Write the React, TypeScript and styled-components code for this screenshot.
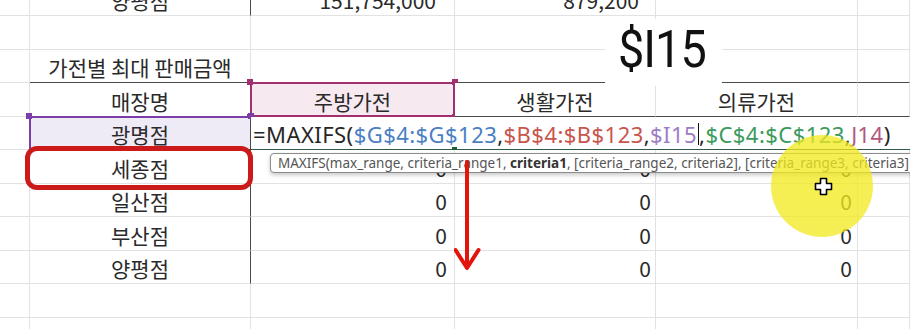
import React from "react";
import styled, { createGlobalStyle, css } from "styled-components";

const GlobalStyle = createGlobalStyle`
  html, body { margin: 0; padding: 0; background: #ffffff; overflow: hidden; }
  * { box-sizing: border-box; }
`;

const GRID = "#e2e2e2";
const DARK = "#4a4a4a";
const TEXT = "#2a2a2a";
const KFONT = `"Noto Sans CJK KR", "Noto Sans", sans-serif`;

const Stage = styled.div`
  position: relative;
  width: 910px;
  height: 329px;
  overflow: hidden;
  background: #fff;
  font-family: ${KFONT};
`;

const Sheet = styled.div`
  display: grid;
  grid-template-columns: 30px 221px 204px 201px 202px 1fr;
  grid-auto-rows: 33.5px;
  margin-top: -17.5px;
`;

type CellProps = {
  $align?: "left" | "center" | "right";
  $pad?: number;
  $right?: string;
  $bottom?: string;
  $bg?: string;
  $span?: boolean;
};

const Cell = styled.div<CellProps>`
  position: relative;
  display: flex;
  align-items: center;
  justify-content: ${(p) =>
    p.$align === "right" ? "flex-end" : p.$align === "left" ? "flex-start" : "center"};
  padding: 3px ${(p) => (p.$align === "right" ? p.$pad ?? 5 : 0)}px 0
    ${(p) => (p.$align === "left" ? p.$pad ?? 3 : 0)}px;
  border-right: 1px solid ${(p) => p.$right ?? GRID};
  border-bottom: 1px solid ${(p) => p.$bottom ?? GRID};
  background: ${(p) => p.$bg ?? "#fff"};
  color: ${TEXT};
  font-size: 21px;
  font-weight: 400;
  line-height: 24px;
  white-space: nowrap;
  ${(p) =>
    p.$span &&
    css`
      grid-column: 3 / -1;
      border-right: none;
    `}
`;

const RangeFrame = styled.div<{ $color: string; $sides: string }>`
  position: absolute;
  inset: -1px ${(p) => (p.$sides.includes("r") ? "-1px" : "0")} -1px -1px;
  border: 0 solid ${(p) => p.$color};
  border-top-width: ${(p) => (p.$sides.includes("t") ? 2 : 0)}px;
  border-left-width: ${(p) => (p.$sides.includes("l") ? 2 : 0)}px;
  border-right-width: ${(p) => (p.$sides.includes("r") ? 2 : 0)}px;
  border-bottom-width: ${(p) => (p.$sides.includes("b") ? 2 : 0)}px;
  pointer-events: none;
`;

const Handle = styled.span<{ $color: string; $h: "l" | "r"; $v: "t" | "b" }>`
  position: absolute;
  width: 6px;
  height: 6px;
  background: ${(p) => p.$color};
  ${(p) => (p.$h === "l" ? "left: -4px;" : "right: -4px;")}
  ${(p) => (p.$v === "t" ? "top: -4px;" : "bottom: -4px;")}
`;

const Formula = styled.span`
  font-family: "Noto Sans", "Liberation Sans", sans-serif;
  font-size: 22px;
  font-weight: 400;
  letter-spacing: 0.45px;
  color: #262626;
  display: inline-flex;
  align-items: center;
`;

const Ref = styled.span<{ $c: string }>`
  color: ${(p) => p.$c};
`;

const Caret = styled.span`
  display: inline-block;
  width: 1px;
  height: 22px;
  background: #111;
  margin: 0 0 0 1px;
`;

const FillHandle = styled.span`
  position: absolute;
  left: 201px;
  bottom: -3px;
  width: 5px;
  height: 5px;
  background: #1f5e3b;
`;

const Label = styled.div`
  position: absolute;
  left: 605px;
  top: 19px;
  width: 117px;
  height: 67px;
  background: #fff;
  display: flex;
  align-items: center;
  justify-content: center;
  font-family: Roboto, "Liberation Sans", sans-serif;
  font-size: 52px;
  line-height: 1;
  color: #111;
  letter-spacing: -1px;
  padding: 0 0 5px 0;
`;

const LabelText = styled.span`
  display: inline-block;
  transform: scaleX(0.9);
  margin-left: -4px;
`;

const Tooltip = styled.div`
  position: absolute;
  left: 270px;
  top: 152.5px;
  width: 660px;
  height: 20.5px;
  background: #fff;
  border: 1px solid #8c8c8c;
  border-radius: 4px;
  box-shadow: 0 2px 4px rgba(0, 0, 0, 0.22);
  padding: 0 0 0 7px;
  display: flex;
  align-items: center;
  font-family: "Noto Sans", "Liberation Sans", sans-serif;
  font-size: 13.5px;
  color: #555;
  white-space: nowrap;
`;

const Bold = styled.b`
  color: #333;
  font-weight: 700;
`;

const Highlight = styled.div`
  position: absolute;
  left: 25px;
  top: 146px;
  width: 228px;
  height: 44px;
  border: 5px solid #cc1a1a;
  border-radius: 12px;
  pointer-events: none;
`;

const ArrowSvg = styled.svg`
  position: absolute;
  left: 454px;
  top: 160px;
`;

const Spot = styled.div`
  position: absolute;
  left: 771px;
  top: 135px;
  width: 102px;
  height: 102px;
  border-radius: 50%;
  background: radial-gradient(
    circle,
    rgba(242, 234, 30, 0.78) 0%,
    rgba(242, 234, 30, 0.75) 78%,
    rgba(242, 234, 30, 0) 100%
  );
  pointer-events: none;
`;

const CursorSvg = styled.svg`
  position: absolute;
  left: 814px;
  top: 177px;
`;

type Row = {
  a?: React.ReactNode;
  b?: string;
  c?: string;
  d?: string;
  pads?: [number, number, number];
  aRight?: string;
  bottomDark?: boolean;
};

const rows: Row[] = [
  { a: "양평점", b: "151,754,000", c: "879,200", pads: [18, 16, 5], aRight: DARK },
  {},
  { a: "가전별 최대 판매금액", bottomDark: true },
];

const dataRows: Row[] = [
  { a: "세종점", b: "0", c: "0", d: "0", aRight: DARK },
  { a: "일산점", b: "0", c: "0", d: "0", aRight: DARK },
  { a: "부산점", b: "0", c: "0", d: "0", aRight: DARK },
  { a: "양평점", b: "0", c: "0", d: "0", aRight: DARK },
  {},
  {},
];

function PlainRow({ r }: { r: Row }) {
  const pads = r.pads ?? [7, 4, 5];
  const bd = r.bottomDark ? DARK : undefined;
  return (
    <>
      <Cell />
      <Cell $right={r.aRight} $bottom={bd}>{r.a}</Cell>
      <Cell $align="right" $pad={pads[0]} $bottom={bd}>{r.b}</Cell>
      <Cell $align="right" $pad={pads[1]} $bottom={bd}>{r.c}</Cell>
      <Cell $align="right" $pad={pads[2]} $bottom={bd}>{r.d}</Cell>
      <Cell $bottom={bd} />
    </>
  );
}

export default function App() {
  return (
    <>
      <GlobalStyle />
      <Stage>
        <Sheet>
          {rows.map((r, i) => (
            <PlainRow key={`t${i}`} r={r} />
          ))}

          {/* header row */}
          <Cell />
          <Cell $right={DARK} $bottom={DARK}>매장명</Cell>
          <Cell $bg="#f7e9f0" $bottom={DARK}>
            주방가전
            <RangeFrame $color="#a3306e" $sides="tlrb" />
            <Handle $color="#a3306e" $h="l" $v="t" />
            <Handle $color="#a3306e" $h="r" $v="t" />
            <Handle $color="#a3306e" $h="l" $v="b" />
            <Handle $color="#a3306e" $h="r" $v="b" />
          </Cell>
          <Cell $bottom={DARK}>생활가전</Cell>
          <Cell $bottom={DARK}>의류가전</Cell>
          <Cell $bottom={DARK} />

          {/* formula row */}
          <Cell />
          <Cell $bg="#efebf6" $right={DARK} $bottom={DARK}>
            광명점
            <RangeFrame $color="#7a3ea6" $sides="tl" />
            <Handle $color="#7a3ea6" $h="l" $v="t" />
            <Handle $color="#7a3ea6" $h="r" $v="t" />
          </Cell>
          <Cell $span $align="left" $pad={2} $bottom="#2f5a44">
            <Formula>
              =MAXIFS(<Ref $c="#4a7fc3">$G$4:$G$123</Ref>,
              <Ref $c="#c9554d">$B$4:$B$123</Ref>,
              <Ref $c="#9d7cc6">$I15</Ref>
              <Caret />,
              <Ref $c="#3c9a5c">$C$4:$C$123</Ref>,
              <Ref $c="#b2577f">J14</Ref>)
            </Formula>
            <FillHandle />
          </Cell>

          {dataRows.map((r, i) => (
            <PlainRow key={`d${i}`} r={r} />
          ))}
        </Sheet>

        <Label>
          <LabelText>$I15</LabelText>
        </Label>

        <Tooltip>
          MAXIFS(max_range, criteria_range1,&nbsp;<Bold>criteria1</Bold>, [criteria_range2,
          criteria2], [criteria_range3, criteria3]
        </Tooltip>

        <Highlight />

        <ArrowSvg width="28" height="114" viewBox="0 0 28 114">
          <path
            d="M13 2 L13 108 M1.5 90 L13 108 L24.5 90"
            fill="none"
            stroke="#e2140c"
            strokeWidth="4"
            strokeLinecap="round"
            strokeLinejoin="round"
          />
        </ArrowSvg>

        <Spot />

        <CursorSvg width="19" height="19" viewBox="0 0 19 19">
          <path
            d="M6.5 1.5 H12.5 V6.5 H17.5 V12.5 H12.5 V17.5 H6.5 V12.5 H1.5 V6.5 H6.5 Z"
            fill="#fff"
            stroke="#000"
            strokeWidth="1.6"
            strokeLinejoin="round"
          />
        </CursorSvg>
      </Stage>
    </>
  );
}
